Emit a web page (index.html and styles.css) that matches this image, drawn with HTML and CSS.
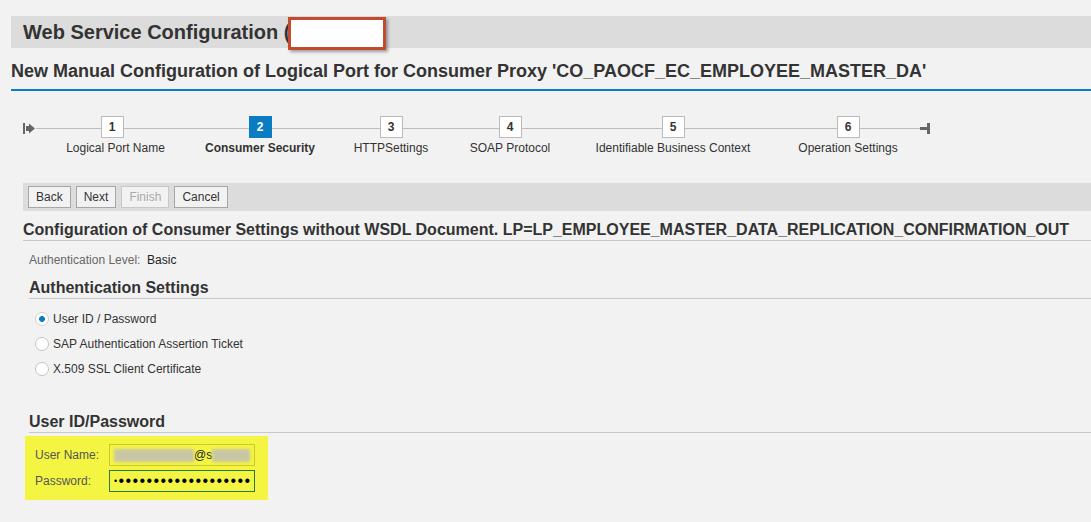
FILE: index.html
```html
<!DOCTYPE html>
<html lang="en">
<head>
    <meta charset="UTF-8">
    <title>Web Service Configuration</title>
    <link rel="stylesheet" href="styles.css">
</head>
<body>
    <header class="page-title">
        Web Service Configuration (<span class="redact"></span>
    </header>
    <h2 class="subtitle">New Manual Configuration of Logical Port for Consumer Proxy 'CO_PAOCF_EC_EMPLOYEE_MASTER_DA'</h2>

    <div class="roadmap">
        <span class="rm-start">
            <svg width="12" height="12" viewBox="0 0 12 12">
                <rect x="0" y="0" width="2" height="11" fill="#666"/>
                <rect x="3" y="3" width="4" height="5" fill="#666"/>
                <polygon points="6,0.5 12,5.5 6,10.5" fill="#666"/>
            </svg>
        </span>
        <ol class="steps">
            <li class="step"><span class="num">1</span><span class="label">Logical Port Name</span></li>
            <li class="step current"><span class="num">2</span><span class="label">Consumer Security</span></li>
            <li class="step"><span class="num">3</span><span class="label">HTTPSettings</span></li>
            <li class="step"><span class="num">4</span><span class="label">SOAP Protocol</span></li>
            <li class="step"><span class="num">5</span><span class="label">Identifiable Business Context</span></li>
            <li class="step"><span class="num">6</span><span class="label">Operation Settings</span></li>
        </ol>
        <span class="rm-end">
            <svg width="11" height="12" viewBox="0 0 11 12">
                <rect x="0" y="4" width="8" height="3" fill="#666"/>
                <rect x="7" y="0" width="3" height="11" fill="#666"/>
            </svg>
        </span>
    </div>

    <div class="toolbar">
        <button>Back</button>
        <button>Next</button>
        <button disabled>Finish</button>
        <button>Cancel</button>
    </div>

    <h3 class="section-title">Configuration of Consumer Settings without WSDL Document. LP=LP_EMPLOYEE_MASTER_DATA_REPLICATION_CONFIRMATION_OUT</h3>

    <div class="auth-level"><span class="muted">Authentication Level:</span>&nbsp; Basic</div>

    <h4 class="group-title">Authentication Settings</h4>
    <div class="radios">
        <div class="radio checked"><span class="radio-dot"></span>User ID / Password</div>
        <div class="radio"><span class="radio-dot"></span>SAP Authentication Assertion Ticket</div>
        <div class="radio"><span class="radio-dot"></span>X.509 SSL Client Certificate</div>
    </div>

    <h4 class="group-title creds-title">User ID/Password</h4>
    <div class="creds">
        <div class="cred-row">
            <label>User Name:</label>
            <div class="field"><span class="blur wide"></span>@s<span class="blur"></span></div>
        </div>
        <div class="cred-row">
            <label>Password:</label>
            <div class="field focused"><span class="dot-first">•</span>•••••••••••••••••••</div>
        </div>
    </div>
</body>
</html>
```

FILE: styles.css
```css
* {
    box-sizing: border-box;
}

body {
    margin: 0;
    background-color: #f2f2f2;
    font-family: "Liberation Sans", Arial, sans-serif;
    font-size: 12px;
    color: #333;
}

.page-title {
    position: relative;
    margin: 16px 0 0 11px;
    height: 32px;
    padding-left: 12px;
    background-color: #dcdcdc;
    font-size: 20px;
    font-weight: bold;
    line-height: 32px;
}

.redact {
    position: absolute;
    left: 277px;
    top: 1px;
    width: 98px;
    height: 33px;
    background-color: #fff;
    border: 3px solid #c24a2e;
    box-shadow: 2px 2px 3px rgba(0, 0, 0, 0.35);
}

.subtitle {
    margin: 0 0 0 11px;
    padding: 12px 0 7px;
    font-size: 18px;
    line-height: 22px;
    border-bottom: 2px solid #0a7cc1;
}

/* roadmap */
.roadmap {
    position: relative;
    display: flex;
    margin-top: 25px;
    padding-left: 23px;
}

.roadmap::before {
    content: "";
    position: absolute;
    left: 36px;
    width: 886px;
    top: 12px;
    height: 1px;
    background-color: #bdbdbd;
}

.rm-start {
    width: 17px;
    padding-top: 7px;
}

.rm-end {
    position: relative;
    margin-left: -4px;
    padding-top: 7px;
}

.steps {
    display: grid;
    grid-template-columns: 144px 152px 110px 128px 198px 152px;
    margin: 0;
    padding: 0;
    list-style: none;
}

.step {
    display: flex;
    flex-direction: column;
    align-items: center;
}

.num {
    position: relative;
    width: 23px;
    height: 22px;
    background-color: #fff;
    border: 1px solid #bbb;
    font-weight: bold;
    line-height: 20px;
    text-align: center;
}

.step.current .num {
    background-color: #0a7cc1;
    border-color: #0a7cc1;
    color: #fff;
}

.label {
    margin-top: 3px;
    line-height: 14px;
    white-space: nowrap;
}

.step:first-child .label {
    margin-left: 7px;
}

.step.current .label {
    font-weight: bold;
}

/* toolbar */
.toolbar {
    display: flex;
    gap: 5px;
    margin: 28px 0 0 23px;
    padding: 3px 5px;
    height: 28px;
    background-color: #dcdcdc;
}

button {
    height: 22px;
    padding: 0 7px;
    font-family: "Liberation Sans", Arial, sans-serif;
    font-size: 12px;
    color: #333;
    background-color: #f2f2f2;
    border: 1px solid #a6a6a6;
    border-radius: 0;
}

button:disabled {
    color: #aaa;
    border-color: #c8c8c8;
}

.section-title {
    margin: 0 0 0 23px;
    padding-top: 9px;
    font-size: 16px;
    line-height: 20px;
    white-space: nowrap;
    border-bottom: 1px solid #c8c8c8;
}

.auth-level {
    margin: 12px 0 0 29px;
    line-height: 14px;
    color: #222;
}

.muted {
    color: #666;
}

.group-title {
    margin: 0 0 0 29px;
    padding-top: 11px;
    font-size: 16px;
    line-height: 20px;
    border-bottom: 1px solid #c8c8c8;
}

.radios {
    margin-top: 7px;
}

.radio {
    display: flex;
    align-items: center;
    gap: 4px;
    height: 25px;
    margin-left: 35px;
}

.radio-dot {
    width: 14px;
    height: 14px;
    border-radius: 50%;
    border: 1px solid #c4c4c4;
    background-color: #fff;
}

.radio.checked .radio-dot {
    border-color: #d0d0d0;
    background: radial-gradient(circle, #0a7cc1 0 2.6px, #fff 3.2px);
}

.creds-title {
    padding-top: 31px;
}

/* highlighted credentials */
.creds {
    width: 243px;
    margin: 3px 0 0 25px;
    padding: 8px 0 8px 10px;
    background-color: #f4f543;
}

.cred-row {
    display: flex;
    align-items: center;
}

.cred-row + .cred-row {
    margin-top: 4px;
}

.cred-row label {
    width: 74px;
    color: #555;
}

.field {
    display: flex;
    align-items: center;
    width: 146px;
    height: 22px;
    padding-left: 4px;
    border: 1px solid #caca2c;
    color: #222;
    white-space: nowrap;
    overflow: hidden;
}

.field.focused {
    border-color: #2b7a3b;
    font-size: 16px;
    letter-spacing: 1.4px;
    color: #000;
}

.dot-first {
    font-size: 9px;
}

.blur {
    display: inline-block;
    width: 38px;
    height: 13px;
    background-color: #c8c6a4;
    filter: blur(1.5px);
}

.blur.wide {
    width: 80px;
}
```
